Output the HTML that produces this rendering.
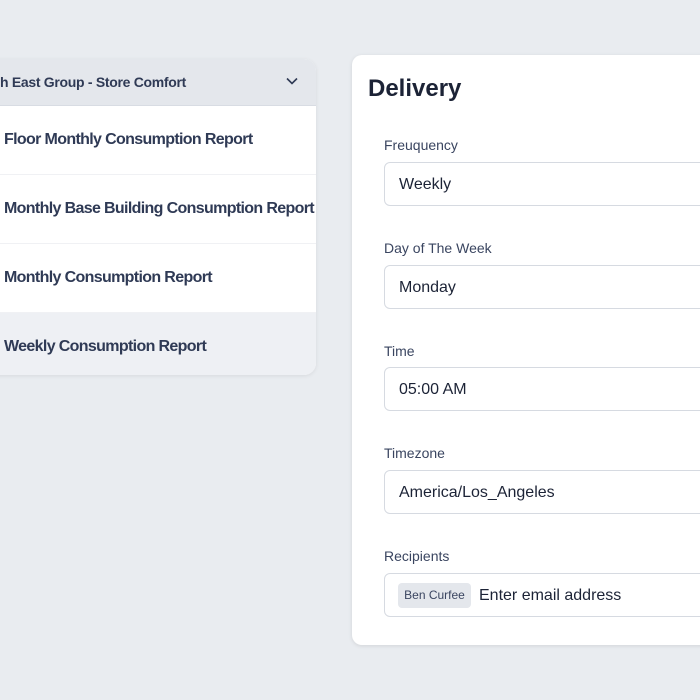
<!DOCTYPE html><html><head><style>
body{margin:0;width:700px;height:700px;background:#e9ecf0;position:relative;overflow:hidden;font-family:"Liberation Sans",sans-serif}
.l{position:absolute;left:-20px;top:59px;width:336px;height:316px;background:#fff;border-radius:12px;overflow:hidden;box-shadow:0 1px 4px rgba(0,0,0,.08)}
.h{height:46px;background:#e4e7ec;border-bottom:1px solid #d8dce3;position:relative}
.h span{position:absolute;left:20px;top:15px;font-size:14px;font-weight:bold;color:#2f3a55;letter-spacing:-.3px}
.r{height:68px;border-bottom:1px solid #f0f1f4;position:relative}
.r span{position:absolute;left:24px;top:25px;font-size:16px;font-weight:bold;color:#2f3a55;white-space:nowrap;letter-spacing:-.65px}
.d{position:absolute;left:352px;top:55px;width:380px;height:590px;background:#fff;border-radius:10px;box-shadow:0 1px 4px rgba(0,0,0,.1)}
.d h1{position:absolute;left:16px;top:20px;margin:0;font-size:24px;color:#1c2336}
.lb{position:absolute;left:32px;font-size:14px;color:#3a4560}
.in{position:absolute;left:32px;width:360px;height:44px;border:1px solid #d6dae1;border-radius:6px;box-sizing:border-box}
.in span{position:absolute;left:14px;top:13px;font-size:16px;color:#1c2336}
</style></head><body>
<div class="l">
<div class="h"><span>h East Group - Store Comfort</span><svg style="position:absolute;left:306px;top:18px" width="12" height="8" viewBox="0 0 12 8"><path d="M1 1.5l5 5 5-5" fill="none" stroke="#2f3a55" stroke-width="1.6"/></svg></div>
<div class="r"><span>Floor Monthly Consumption Report</span></div>
<div class="r"><span>Monthly Base Building Consumption Report</span></div>
<div class="r"><span>Monthly Consumption Report</span></div>
<div class="r" style="background:#eef0f4;border:0"><span>Weekly Consumption Report</span></div>
</div>
<div class="d"><h1>Delivery</h1>
<div class="lb" style="top:82px">Freuquency</div><div class="in" style="top:107px"><span>Weekly</span></div>
<div class="lb" style="top:185px">Day of The Week</div><div class="in" style="top:210px"><span>Monday</span></div>
<div class="lb" style="top:288px">Time</div><div class="in" style="top:312px"><span>05:00 AM</span></div>
<div class="lb" style="top:390px">Timezone</div><div class="in" style="top:415px"><span>America/Los_Angeles</span></div>
<div class="lb" style="top:493px">Recipients</div><div class="in" style="top:518px"><div style="position:absolute;left:13px;top:9px;width:73px;height:25px;background:#e4e7ec;border-radius:4px;font-size:12px;color:#3a4560;line-height:25px;text-align:center">Ben Curfee</div><span style="left:94px">Enter email address</span></div>
</div>
</body></html>
